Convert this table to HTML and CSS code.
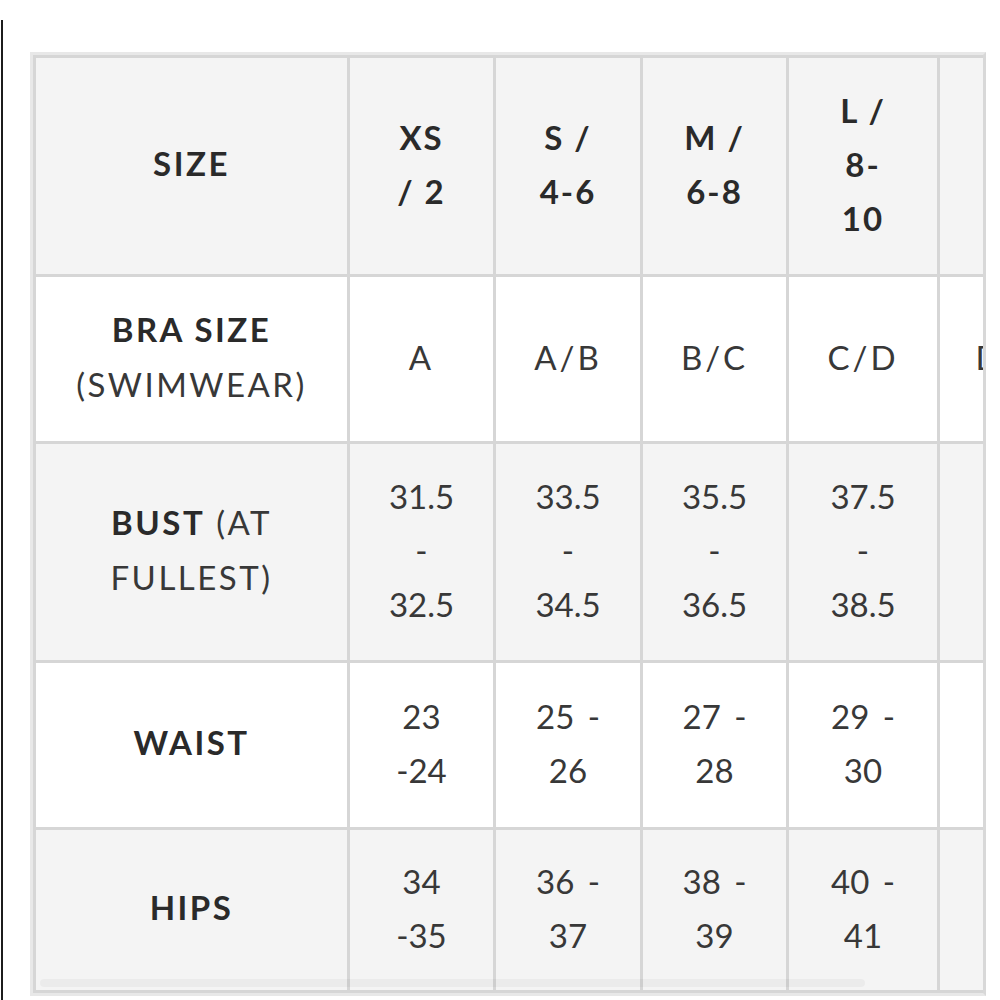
FILE: index.html
```html
<!DOCTYPE html>
<html lang="en">
<head>
<meta charset="utf-8">
<title>Size chart</title>
<link rel="stylesheet" href="styles.css">
</head>
<body>
<div class="frame">
  <div class="chart">
    <div class="grid">
      <div class="cell head label"><b>SIZE</b></div>
      <div class="cell head"><b>XS<br>/ 2</b></div>
      <div class="cell head"><b>S /<br>4-6</b></div>
      <div class="cell head"><b>M /<br>6-8</b></div>
      <div class="cell head"><b>L /<br>8-<br>10</b></div>
      <div class="cell head"><b>XL /<br>10-<br>12</b></div>

      <div class="cell label"><span><b>BRA SIZE</b><br>(SWIMWEAR)</span></div>
      <div class="cell alpha">A</div>
      <div class="cell alpha">A/B</div>
      <div class="cell alpha">B/C</div>
      <div class="cell alpha">C/D</div>
      <div class="cell alpha">D/DD</div>

      <div class="cell shade label"><span><b>BUST</b> (AT<br>FULLEST)</span></div>
      <div class="cell shade value">31.5<br>-<br>32.5</div>
      <div class="cell shade value">33.5<br>-<br>34.5</div>
      <div class="cell shade value">35.5<br>-<br>36.5</div>
      <div class="cell shade value">37.5<br>-<br>38.5</div>
      <div class="cell shade value">39.5<br>-<br>40.5</div>

      <div class="cell label"><b>WAIST</b></div>
      <div class="cell value">23<br>-24</div>
      <div class="cell value">25 -<br>26</div>
      <div class="cell value">27 -<br>28</div>
      <div class="cell value">29 -<br>30</div>
      <div class="cell value">31 -<br>32</div>

      <div class="cell shade label"><b>HIPS</b></div>
      <div class="cell shade value">34<br>-35</div>
      <div class="cell shade value">36 -<br>37</div>
      <div class="cell shade value">38 -<br>39</div>
      <div class="cell shade value">40 -<br>41</div>
      <div class="cell shade value">42 -<br>43</div>
    </div>
    <div class="scrollbar"></div>
  </div>
</div>
</body>
</html>
```

FILE: styles.css
```css
html, body {
  margin: 0;
  padding: 0;
  background: #ffffff;
}

body {
  font-family: Lato, "Liberation Sans", sans-serif;
  color: #333333;
}

.frame {
  margin: 20px 0 0 1px;
  border-left: 2px solid #1c1c1c;
  padding: 32px 0 0 27px;
  height: 980px;
  box-sizing: border-box;
}

.chart {
  position: relative;
  width: 956px;
  box-sizing: border-box;
  border: 3px solid #e8e8e8;
  border-right-color: #d8d8d8;
  overflow: hidden;
}

.grid {
  display: grid;
  grid-template-columns: 314px 146px 147px 146px 151px 176px;
  grid-template-rows: 219px 167px 219px 167px 163px;
  width: max-content;
  border-top: 3px solid #d6d6d6;
  border-left: 3px solid #d6d6d6;
}

.cell {
  box-sizing: border-box;
  display: flex;
  align-items: center;
  justify-content: center;
  text-align: center;
  padding-bottom: 5px;
  border-right: 3px solid #d6d6d6;
  border-bottom: 3px solid #d6d6d6;
  background: #ffffff;
  font-size: 33px;
  line-height: 54px;
  font-weight: 400;
  color: #383838;
  white-space: nowrap;
}

.cell b {
  font-weight: 700;
  color: #2a2a2a;
}

.head,
.shade {
  background: #f4f4f4;
}

.head {
  letter-spacing: 2px;
}

.label {
  line-height: 55px;
  letter-spacing: 2.5px;
}

.alpha {
  letter-spacing: 3px;
}

.value {
  word-spacing: 5px;
}

.scrollbar {
  position: absolute;
  left: 7px;
  bottom: 6px;
  width: 825px;
  height: 8px;
  border-radius: 4px;
  background: rgba(0, 0, 0, 0.035);
}
```
